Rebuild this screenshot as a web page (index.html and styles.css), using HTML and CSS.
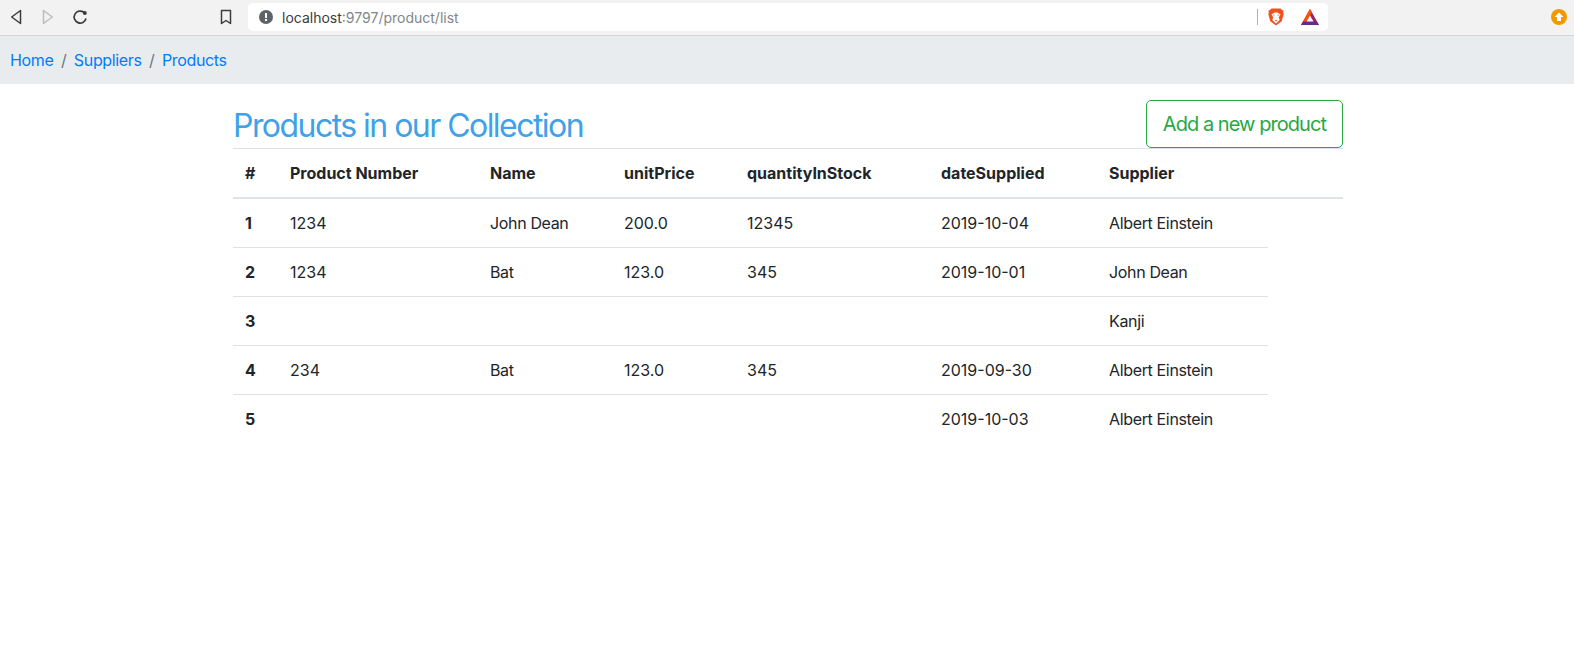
FILE: index.html
```html
<!DOCTYPE html>
<html lang="en">
<head>
<meta charset="UTF-8">
<meta name="viewport" content="width=device-width, initial-scale=1.0">
<title>Products</title>
<link rel="stylesheet" href="styles.css">
</head>
<body>

<div class="toolbar">
    <div class="nav-buttons">
        <svg class="icon" viewBox="0 0 16 16"><path d="M12.5 1.500 3.700 8l8.800 6.500z" fill="none" stroke="#3c3c3c" stroke-width="1.500" stroke-linejoin="round"/></svg>
        <svg class="icon" viewBox="0 0 16 16"><path d="M3.500 1.500 12.300 8l-8.800 6.500z" fill="none" stroke="#bdbdbd" stroke-width="1.500" stroke-linejoin="round"/></svg>
        <svg class="icon" viewBox="0 0 16 16"><path d="M14 9.500A6 6 0 1 1 11.800 3.300" fill="none" stroke="#3c3c3c" stroke-width="1.700"/><circle cx="12.800" cy="4" r="2" fill="#3c3c3c"/></svg>
    </div>
    <svg class="icon bookmark" viewBox="0 0 16 16"><path d="M3.500 1.500h9v13L8 11.500l-4.500 3z" fill="none" stroke="#3c3c3c" stroke-width="1.500" stroke-linejoin="round"/></svg>
    <div class="address">
        <svg class="info" viewBox="0 0 14 14"><circle cx="7" cy="7" r="7" fill="#5f6368"/><rect x="6" y="3" width="2" height="5" fill="#fff"/><rect x="6" y="9" width="2" height="2" fill="#fff"/></svg>
        <span class="host">localhost</span><span class="path">:9797/product/list</span>
        <span class="divider"></span>
        <svg class="brave" viewBox="0 0 16 18"><path d="M3.500.5h9L14 2l1.500.5-.3 2 .5 1.500-2 7.200L8 17.500l-5.700-4.300-2-7.200.5-1.500-.3-2L2 2z" fill="#f1501f"/><path d="M3.500 6.500 6.500 4.500h3l3 2-1.800 3 1 2.500-3.700 3.500L4.300 12l1-2.500z" fill="#fff"/><path d="M6.500 12h3L8 13.500z" fill="#f1501f"/><path d="M4.500 6.500h2v1.500h-1zM11.500 6.500h-2v1.500h1z" fill="#f9a183"/></svg>
        <svg class="bat" viewBox="0 0 18 16"><path d="M9 0 18 16H0z" fill="#9e1f63"/><path d="M9 0 11 3.500 3 16H0z" fill="#ff5000"/><path d="M0 16 2.200 12.500H15.800L18 16z" fill="#662d91"/><path d="M9 6.500 12.500 12.500h-7z" fill="#fff"/></svg>
    </div>
    <svg class="update" viewBox="0 0 16 16"><circle cx="8" cy="8" r="8" fill="#f29900"/><path d="M8 3.500 12.500 8H10v4H6V8H3.500z" fill="#fff"/></svg>
</div>

<nav class="breadcrumb">
    <a href="#">Home</a>
    <span class="sep">/</span>
    <a href="#">Suppliers</a>
    <span class="sep">/</span>
    <a href="#">Products</a>
</nav>

<div class="container">
    <div class="page-head">
        <h2>Products in our Collection</h2>
        <a class="btn-add" href="#">Add a new product</a>
    </div>
    <table class="products">
        <thead>
            <tr>
                <th>#</th>
                <th>Product Number</th>
                <th>Name</th>
                <th>unitPrice</th>
                <th>quantityInStock</th>
                <th>dateSupplied</th>
                <th>Supplier</th>
                <th></th>
            </tr>
        </thead>
        <tbody>
            <tr><th>1</th><td class="num">1234</td><td>John Dean</td><td class="num">200.0</td><td class="num">12345</td><td class="num">2019-10-04</td><td>Albert Einstein</td></tr>
            <tr><th>2</th><td class="num">1234</td><td>Bat</td><td class="num">123.0</td><td class="num">345</td><td class="num">2019-10-01</td><td>John Dean</td></tr>
            <tr><th>3</th><td></td><td></td><td></td><td></td><td></td><td>Kanji</td></tr>
            <tr><th>4</th><td class="num">234</td><td>Bat</td><td class="num">123.0</td><td class="num">345</td><td class="num">2019-09-30</td><td>Albert Einstein</td></tr>
            <tr><th>5</th><td></td><td></td><td></td><td></td><td class="num">2019-10-03</td><td>Albert Einstein</td></tr>
        </tbody>
    </table>
</div>

</body>
</html>
```
FILE: styles.css
```css
* {
    box-sizing: border-box;
}
body {
    margin: 0;
    font-family: Inter, "Liberation Sans", sans-serif;
    font-size: 16px;
    line-height: 1.5;
    color: #212529;
    background-color: #fff;
}
.toolbar {
    display: flex;
    align-items: center;
    height: 36px;
    padding-top: 3px;
    padding-bottom: 4px;
    background-color: #f2f2f2;
    border-bottom: 1px solid #d4d6d9;
}
.nav-buttons {
    display: flex;
    gap: 16px;
    margin-left: 8px;
}
.icon {
    width: 16px;
    height: 16px;
}
.bookmark {
    margin-left: 130px;
}
.address {
    display: flex;
    align-items: center;
    width: 1080px;
    height: 28px;
    margin-left: 14px;
    padding: 0 9px 0 11px;
    background-color: #fff;
    border-radius: 5px;
    font-size: 14px;
}
.info {
    width: 14px;
    height: 14px;
    margin-right: 9px;
}
.host {
    color: #3c3c3c;
}
.path {
    color: #80868b;
}
.divider {
    width: 1px;
    height: 16px;
    margin-left: auto;
    background-color: #b0b0b0;
}
.brave {
    width: 16px;
    height: 18px;
    margin-left: 10px;
}
.bat {
    width: 18px;
    height: 16px;
    margin-left: 17px;
}
.update {
    width: 16px;
    height: 16px;
    margin-left: auto;
    margin-right: 7px;
}
.breadcrumb {
    display: flex;
    align-items: center;
    gap: 7.5px;
    height: 48px;
    padding: 0 10px;
    background-color: #e9ecef;
    letter-spacing: -0.35px;
}
.breadcrumb a {
    color: #007bff;
    text-decoration: none;
}
.sep {
    color: #6c757d;
}
.container {
    width: 1110px;
    margin-left: 233px;
}
.page-head {
    display: flex;
    justify-content: space-between;
    align-items: flex-end;
    padding-top: 16px;
}
h2 {
    margin: 0;
    padding-top: 4px;
    font-size: 32px;
    font-weight: 400;
    line-height: 44px;
    letter-spacing: -1.54px;
    color: #3fa2e8;
}
.btn-add {
    height: 48px;
    padding: 8px 16px;
    font-size: 20px;
    line-height: 30px;
    letter-spacing: -0.95px;
    color: #28a745;
    text-decoration: none;
    border: 1px solid #28a745;
    border-radius: 5px;
}
.products {
    width: 100%;
    table-layout: fixed;
    border-collapse: collapse;
}
.products th,
.products td {
    height: 49px;
    padding: 12px;
    text-align: left;
    vertical-align: top;
    border-top: 1px solid #dee2e6;
}
.products td {
    letter-spacing: -0.35px;
}
.products td.num {
    letter-spacing: 0;
}
.products thead th {
    vertical-align: bottom;
    border-bottom: 2px solid #dee2e6;
}
.products thead th:nth-child(1) { width: 45px; }
.products thead th:nth-child(2) { width: 200px; }
.products thead th:nth-child(3) { width: 134px; }
.products thead th:nth-child(4) { width: 123px; }
.products thead th:nth-child(5) { width: 194px; }
.products thead th:nth-child(6) { width: 168px; }
.products thead th:nth-child(7) { width: 171px; }
.products thead th:nth-child(8) { width: 75px; }
```
